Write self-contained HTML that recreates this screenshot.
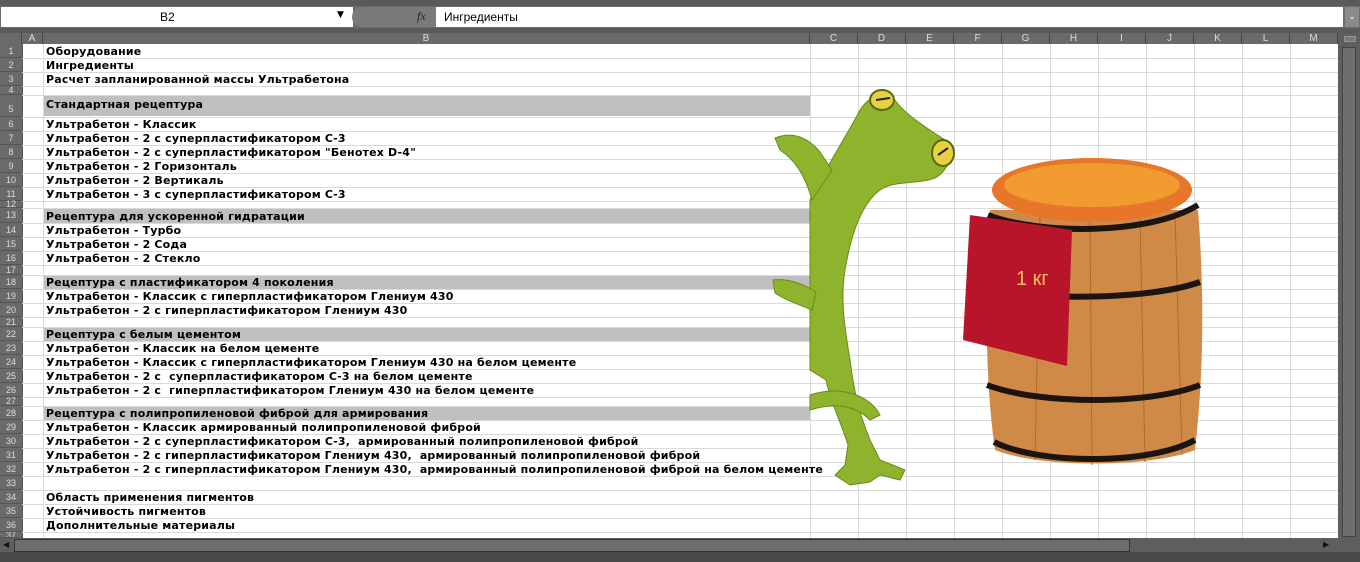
<!DOCTYPE html>
<html><head><meta charset="utf-8"><style>
*{margin:0;padding:0;box-sizing:border-box}
body{width:1360px;height:562px;overflow:hidden;background:#fff;position:relative;font-family:"DejaVu Sans","Liberation Sans",sans-serif}
.a{position:absolute}
.t{position:absolute;left:46px;font-size:11px;font-weight:bold;color:#000;white-space:nowrap;line-height:14px;letter-spacing:0.18px;margin-top:1px}
.rh{position:absolute;left:0;width:22px;background:#6a6a6a;color:#ddd;font-size:9px;text-align:center;border-bottom:1px solid #555;font-family:"Liberation Sans",sans-serif}
.gl{position:absolute;left:22px;width:1316px;height:1px;background:#dadada}
.vl{position:absolute;top:44px;height:494px;width:1px;background:#dadada}
.ch{position:absolute;top:33px;height:11px;background:#6a6a6a;color:#ddd;font-size:10px;line-height:11px;text-align:center;border-right:1px solid #444;font-family:"Liberation Sans",sans-serif}
.gray{position:absolute;left:43px;width:767px;background:#bfbfbf}
</style></head><body>
<div class="a" style="left:0;top:0;width:1360px;height:6px;background:#5a5a5a"></div>
<div class="a" style="left:0;top:6px;width:1360px;height:22px;background:#6a6a6a"></div>
<div class="a" style="left:1px;top:7px;width:352px;height:20px;background:#fff"></div>
<div class="a" style="left:160px;top:10px;font-size:12px;font-family:'Liberation Sans',sans-serif">B2</div>
<div class="a" style="left:337px;top:10px;font-size:9px">▼</div>
<div class="a" style="left:352px;top:7px;width:84px;height:20px;background:#7a7a7a;border-radius:10px 0 0 10px"></div>
<div class="a" style="left:417px;top:9px;font-size:12px;font-style:italic;color:#222;font-family:'Liberation Serif',serif">fx</div>
<div class="a" style="left:436px;top:7px;width:907px;height:20px;background:#fff"></div>
<div class="a" style="left:444px;top:10px;font-size:12px;font-family:'Liberation Sans',sans-serif">Ингредиенты</div>
<div class="a" style="left:1345px;top:7px;width:14px;height:20px;background:#8a8a8a;color:#fff;font-size:9px;text-align:center;line-height:20px">⌄</div>
<div class="a" style="left:0;top:28px;width:1360px;height:5px;background:#5a5a5a"></div>
<div class="a" style="left:0;top:33px;width:22px;height:11px;background:#6a6a6a;border-right:1px solid #444"></div>
<div class="ch" style="left:22px;width:21px">A</div>
<div class="ch" style="left:43px;width:767px">B</div>
<div class="ch" style="left:810px;width:48px">C</div>
<div class="ch" style="left:858px;width:48px">D</div>
<div class="ch" style="left:906px;width:48px">E</div>
<div class="ch" style="left:954px;width:48px">F</div>
<div class="ch" style="left:1002px;width:48px">G</div>
<div class="ch" style="left:1050px;width:48px">H</div>
<div class="ch" style="left:1098px;width:48px">I</div>
<div class="ch" style="left:1146px;width:48px">J</div>
<div class="ch" style="left:1194px;width:48px">K</div>
<div class="ch" style="left:1242px;width:48px">L</div>
<div class="ch" style="left:1290px;width:48px">M</div>
<div class="a" style="left:1338px;top:33px;width:22px;height:519px;background:#5e5e5e"></div>
<div class="a" style="left:1342px;top:47px;width:14px;height:490px;background:#6e6e6e;border:1px solid #444"></div>
<div class="a" style="left:1344px;top:36px;width:12px;height:6px;border:1px solid #999;background:#777"></div>

<div class="gray" style="top:96px;height:20px"></div>
<div class="gray" style="top:209px;height:14px"></div>
<div class="gray" style="top:275px;height:14px"></div>
<div class="gray" style="top:327px;height:14px"></div>
<div class="gray" style="top:406px;height:14px"></div>

<div class="vl" style="left:22px;background:#555"></div>
<div class="vl" style="left:43px"></div><div class="vl" style="left:810px"></div><div class="vl" style="left:858px"></div><div class="vl" style="left:906px"></div><div class="vl" style="left:954px"></div><div class="vl" style="left:1002px"></div><div class="vl" style="left:1050px"></div><div class="vl" style="left:1098px"></div><div class="vl" style="left:1146px"></div><div class="vl" style="left:1194px"></div><div class="vl" style="left:1242px"></div><div class="vl" style="left:1290px"></div>

<div class="gl" style="top:58px"></div><div class="gl" style="top:72px"></div><div class="gl" style="top:86px"></div><div class="gl" style="top:95px"></div><div class="gl" style="top:117px"></div><div class="gl" style="top:131px"></div><div class="gl" style="top:145px"></div><div class="gl" style="top:159px"></div><div class="gl" style="top:173px"></div><div class="gl" style="top:187px"></div><div class="gl" style="top:201px"></div><div class="gl" style="top:208px"></div><div class="gl" style="top:223px"></div><div class="gl" style="top:237px"></div><div class="gl" style="top:251px"></div><div class="gl" style="top:265px"></div><div class="gl" style="top:275px"></div><div class="gl" style="top:289px"></div><div class="gl" style="top:303px"></div><div class="gl" style="top:317px"></div><div class="gl" style="top:327px"></div><div class="gl" style="top:341px"></div><div class="gl" style="top:355px"></div><div class="gl" style="top:369px"></div><div class="gl" style="top:383px"></div><div class="gl" style="top:397px"></div><div class="gl" style="top:406px"></div><div class="gl" style="top:420px"></div><div class="gl" style="top:434px"></div><div class="gl" style="top:448px"></div><div class="gl" style="top:462px"></div><div class="gl" style="top:476px"></div><div class="gl" style="top:490px"></div><div class="gl" style="top:504px"></div><div class="gl" style="top:518px"></div><div class="gl" style="top:532px"></div>

<div class="rh" style="top:44px;height:14px;line-height:14px">1</div><div class="rh" style="top:58px;height:14px;line-height:14px">2</div><div class="rh" style="top:72px;height:14px;line-height:14px">3</div><div class="rh" style="top:86px;height:9px;line-height:9px">4</div><div class="rh" style="top:95px;height:22px;line-height:28px">5</div><div class="rh" style="top:117px;height:14px;line-height:14px">6</div><div class="rh" style="top:131px;height:14px;line-height:14px">7</div><div class="rh" style="top:145px;height:14px;line-height:14px">8</div><div class="rh" style="top:159px;height:14px;line-height:14px">9</div><div class="rh" style="top:173px;height:14px;line-height:14px">10</div><div class="rh" style="top:187px;height:14px;line-height:14px">11</div><div class="rh" style="top:201px;height:7px;line-height:7px">12</div><div class="rh" style="top:208px;height:15px;line-height:15px">13</div><div class="rh" style="top:223px;height:14px;line-height:14px">14</div><div class="rh" style="top:237px;height:14px;line-height:14px">15</div><div class="rh" style="top:251px;height:14px;line-height:14px">16</div><div class="rh" style="top:265px;height:10px;line-height:10px">17</div><div class="rh" style="top:275px;height:14px;line-height:14px">18</div><div class="rh" style="top:289px;height:14px;line-height:14px">19</div><div class="rh" style="top:303px;height:14px;line-height:14px">20</div><div class="rh" style="top:317px;height:10px;line-height:10px">21</div><div class="rh" style="top:327px;height:14px;line-height:14px">22</div><div class="rh" style="top:341px;height:14px;line-height:14px">23</div><div class="rh" style="top:355px;height:14px;line-height:14px">24</div><div class="rh" style="top:369px;height:14px;line-height:14px">25</div><div class="rh" style="top:383px;height:14px;line-height:14px">26</div><div class="rh" style="top:397px;height:9px;line-height:9px">27</div><div class="rh" style="top:406px;height:14px;line-height:14px">28</div><div class="rh" style="top:420px;height:14px;line-height:14px">29</div><div class="rh" style="top:434px;height:14px;line-height:14px">30</div><div class="rh" style="top:448px;height:14px;line-height:14px">31</div><div class="rh" style="top:462px;height:14px;line-height:14px">32</div><div class="rh" style="top:476px;height:14px;line-height:14px">33</div><div class="rh" style="top:490px;height:14px;line-height:14px">34</div><div class="rh" style="top:504px;height:14px;line-height:14px">35</div><div class="rh" style="top:518px;height:14px;line-height:14px">36</div><div class="rh" style="top:532px;height:6px;line-height:6px;overflow:hidden">37</div>

<div class="t" style="top:44px">Оборудование</div>
<div class="t" style="top:58px">Ингредиенты</div>
<div class="t" style="top:72px">Расчет запланированной массы Ультрабетона</div>
<div class="t" style="top:97px">Стандартная рецептура</div>
<div class="t" style="top:117px">Ультрабетон - Классик</div>
<div class="t" style="top:131px">Ультрабетон - 2 с суперпластификатором С-3</div>
<div class="t" style="top:145px">Ультрабетон - 2 с суперпластификатором "Бенотех D-4"</div>
<div class="t" style="top:159px">Ультрабетон - 2 Горизонталь</div>
<div class="t" style="top:173px">Ультрабетон - 2 Вертикаль</div>
<div class="t" style="top:187px">Ультрабетон - 3 с суперпластификатором С-3</div>
<div class="t" style="top:209px">Рецептура для ускоренной гидратации</div>
<div class="t" style="top:223px">Ультрабетон - Турбо</div>
<div class="t" style="top:237px">Ультрабетон - 2 Сода</div>
<div class="t" style="top:251px">Ультрабетон - 2 Стекло</div>
<div class="t" style="top:275px">Рецептура с пластификатором 4 поколения</div>
<div class="t" style="top:289px">Ультрабетон - Классик с гиперпластификатором Глениум 430</div>
<div class="t" style="top:303px">Ультрабетон - 2 с гиперпластификатором Глениум 430</div>
<div class="t" style="top:327px">Рецептура с белым цементом</div>
<div class="t" style="top:341px">Ультрабетон - Классик на белом цементе</div>
<div class="t" style="top:355px">Ультрабетон - Классик с гиперпластификатором Глениум 430 на белом цементе</div>
<div class="t" style="top:369px">Ультрабетон - 2 с &nbsp;суперпластификатором С-3 на белом цементе</div>
<div class="t" style="top:383px">Ультрабетон - 2 с &nbsp;гиперпластификатором Глениум 430 на белом цементе</div>
<div class="t" style="top:406px">Рецептура с полипропиленовой фиброй для армирования</div>
<div class="t" style="top:420px">Ультрабетон - Классик армированный полипропиленовой фиброй</div>
<div class="t" style="top:434px">Ультрабетон - 2 с суперпластификатором С-3, &nbsp;армированный полипропиленовой фиброй</div>
<div class="t" style="top:448px">Ультрабетон - 2 с гиперпластификатором Глениум 430, &nbsp;армированный полипропиленовой фиброй</div>
<div class="t" style="top:462px">Ультрабетон - 2 с гиперпластификатором Глениум 430, &nbsp;армированный полипропиленовой фиброй на белом цементе</div>
<div class="t" style="top:490px">Область применения пигментов</div>
<div class="t" style="top:504px">Устойчивость пигментов</div>
<div class="t" style="top:518px">Дополнительные материалы</div>

<svg class="a" style="left:0;top:0" width="1360" height="562">
<g fill="#8db42c" stroke="#6a8a18" stroke-width="1">
<path d="M810 200 C830 160 850 130 860 110 C870 95 885 90 895 100 C905 115 930 130 945 140 C955 150 950 170 935 178 C915 185 895 180 880 190 C860 205 850 240 845 270 C840 300 845 330 850 360 C855 400 862 420 870 440 L880 460 L905 470 L900 480 L880 475 L870 482 L850 485 L835 475 L845 465 L848 445 C840 420 830 400 826 380 L810 370 Z"/>
<path d="M810 395 C840 385 870 395 880 415 L870 420 C855 405 835 402 810 410 Z"/>
<path d="M812 200 C805 175 795 160 780 150 L775 138 C795 130 810 140 820 152 L832 170 Z"/>
<path d="M812 310 C800 305 785 300 775 293 L773 280 C790 278 805 285 816 292 Z"/>
</g>
<ellipse cx="882" cy="100" rx="12" ry="10" fill="#e8d040" stroke="#556b12" stroke-width="2"/>
<ellipse cx="943" cy="153" rx="11" ry="13" fill="#e8d040" stroke="#556b12" stroke-width="2"/>
<path d="M876 100 L890 98 M938 155 L948 148" stroke="#222" stroke-width="2"/>
<path d="M990 210 C985 300 985 380 995 450 C1040 468 1150 468 1195 450 C1203 380 1205 300 1198 210 Z" fill="#d08a48"/>
<g stroke="#b06a30" stroke-width="1"><path d="M1040 215 L1035 460 M1090 215 L1092 465 M1140 215 L1145 462 M1175 212 L1182 455"/></g>
<ellipse cx="1092" cy="190" rx="100" ry="32" fill="#e8762a"/>
<ellipse cx="1092" cy="185" rx="88" ry="22" fill="#f09a30"/>
<g fill="none" stroke="#1c1410" stroke-width="6">
<path d="M988 215 C1040 235 1150 235 1198 205"/>
<path d="M986 290 C1040 300 1150 300 1200 282"/>
<path d="M987 385 C1040 405 1150 405 1200 385"/>
<path d="M994 442 C1040 465 1150 465 1195 440"/>
</g>
<path d="M970 215 L1072 230 L1067 366 L963 340 Z" fill="#b8142a"/>
<text x="1016" y="285" font-size="20" fill="#f0c060" font-family="Liberation Sans">1 кг</text>
</svg>
<div class="a" style="left:0;top:538px;width:1338px;height:14px;background:#5e5e5e"></div>
<div class="a" style="left:14px;top:539px;width:1116px;height:13px;background:#6e6e6e;border:1px solid #333"></div>
<div class="a" style="left:3px;top:540px;font-size:8px;color:#111">◀</div>
<div class="a" style="left:1323px;top:540px;font-size:8px;color:#111">▶</div>
<div class="a" style="left:0;top:552px;width:1360px;height:10px;background:#4a4a4a"></div>
</body></html>
